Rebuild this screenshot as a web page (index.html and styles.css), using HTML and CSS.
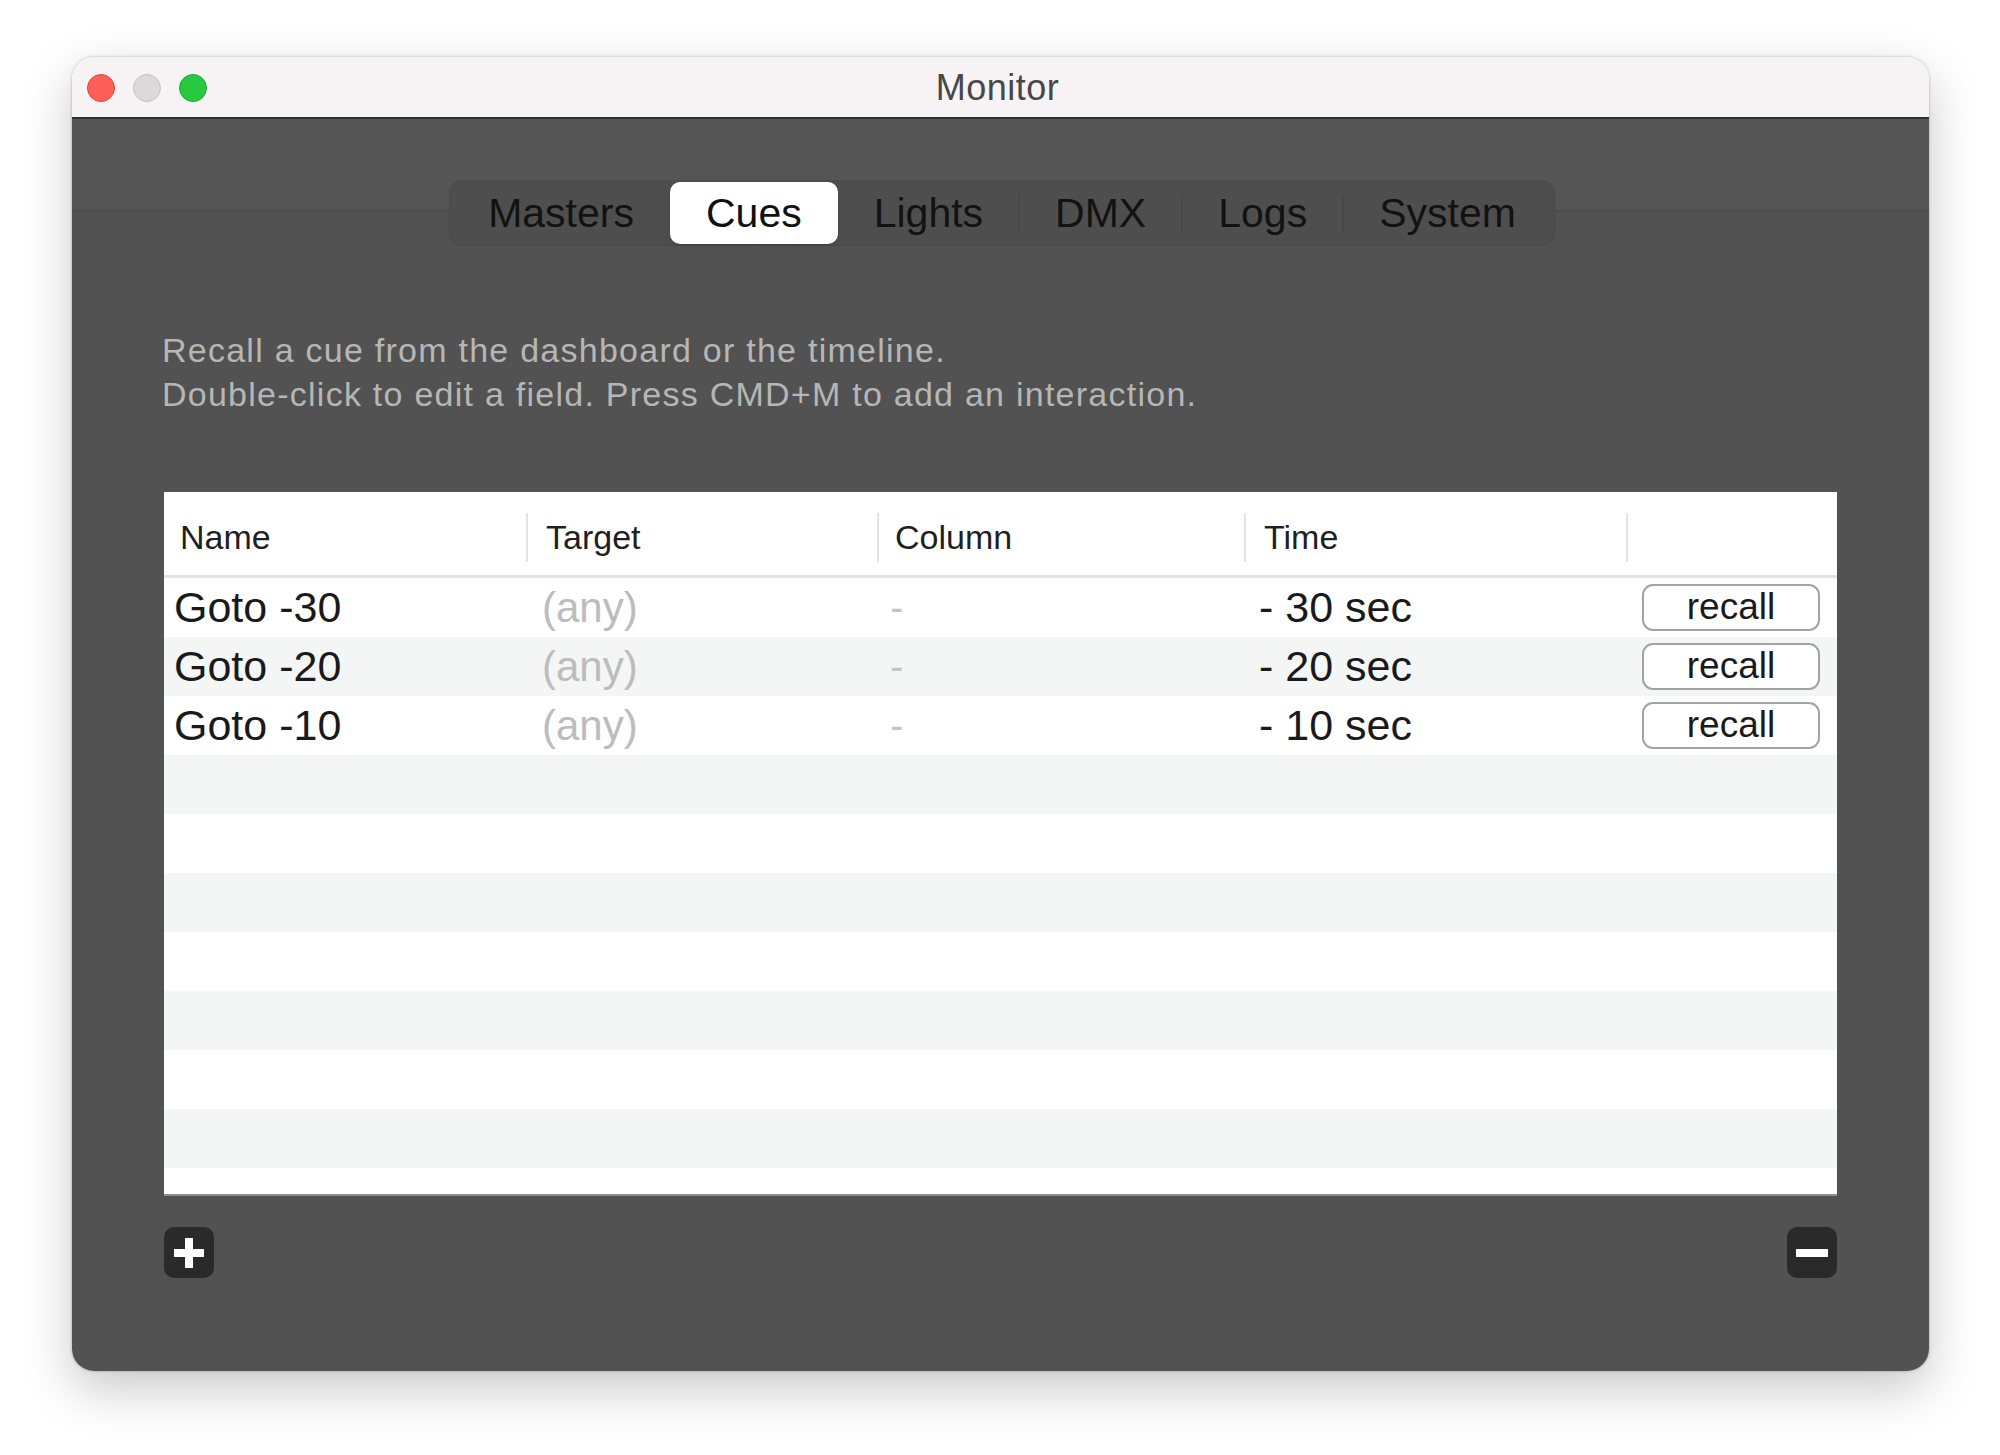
FILE: index.html
```html
<!DOCTYPE html>
<html lang="en">
<head>
<meta charset="utf-8">
<title>Monitor</title>
<link rel="stylesheet" href="styles.css">
</head>
<body>
<div class="window">
  <div class="titlebar">
    <div class="lights">
      <span class="light red"></span>
      <span class="light gray"></span>
      <span class="light green"></span>
    </div>
    <div class="title">Monitor</div>
    <div class="spacer"></div>
  </div>
  <div class="content">
    <div class="tabs-row">
      <div class="segmented">
        <span class="seg">Masters</span>
        <span class="seg active">Cues</span>
        <span class="seg">Lights</span>
        <span class="sep"></span>
        <span class="seg">DMX</span>
        <span class="sep"></span>
        <span class="seg">Logs</span>
        <span class="sep"></span>
        <span class="seg">System</span>
      </div>
    </div>
    <p class="desc">Recall a cue from the dashboard or the timeline.<br>Double-click to edit a field. Press CMD+M to add an interaction.</p>
    <div class="table">
      <div class="thead">
        <div class="th">Name</div>
        <div class="th">Target</div>
        <div class="th">Column</div>
        <div class="th">Time</div>
        <div class="th last"></div>
      </div>
      <div class="tr">
        <div class="td name">Goto -30</div>
        <div class="td muted">(any)</div>
        <div class="td dash">-</div>
        <div class="td time">- 30 sec</div>
        <div class="td act"><button class="recall">recall</button></div>
      </div>
      <div class="tr">
        <div class="td name">Goto -20</div>
        <div class="td muted">(any)</div>
        <div class="td dash">-</div>
        <div class="td time">- 20 sec</div>
        <div class="td act"><button class="recall">recall</button></div>
      </div>
      <div class="tr">
        <div class="td name">Goto -10</div>
        <div class="td muted">(any)</div>
        <div class="td dash">-</div>
        <div class="td time">- 10 sec</div>
        <div class="td act"><button class="recall">recall</button></div>
      </div>
      <div class="tr empty"></div>
      <div class="tr empty"></div>
      <div class="tr empty"></div>
      <div class="tr empty"></div>
      <div class="tr empty"></div>
      <div class="tr empty"></div>
      <div class="tr empty"></div>
    </div>
    <div class="footer">
      <button class="sq" aria-label="Add">
        <svg width="30" height="30" viewBox="0 0 30 30"><rect x="11" y="0" width="8" height="30" fill="#fff"/><rect x="0" y="11" width="30" height="8" fill="#fff"/></svg>
      </button>
      <button class="sq" aria-label="Remove">
        <svg width="32" height="8" viewBox="0 0 32 8"><rect x="0" y="0" width="32" height="8" fill="#fff"/></svg>
      </button>
    </div>
  </div>
</div>
</body>
</html>
```
FILE: styles.css
```css
html, body {
  margin: 0;
  padding: 0;
  background: #ffffff;
}

body {
  font-family: "Liberation Sans", Arial, sans-serif;
  width: 2000px;
  height: 1455px;
  overflow: hidden;
}

.window {
  margin: 57px 0 0 72px;
  width: 1857px;
  height: 1314px;
  border-radius: 22px;
  overflow: hidden;
  display: flex;
  flex-direction: column;
  box-shadow: 0 18px 50px rgba(0, 0, 0, 0.22), 0 0 3px rgba(0, 0, 0, 0.28);
}

.titlebar {
  height: 60px;
  flex: none;
  background: #f7f3f4;
  border-bottom: 2px solid #2e2e2e;
  display: grid;
  grid-template-columns: 1fr auto 1fr;
  align-items: center;
}

.lights {
  display: flex;
  gap: 18px;
  padding-left: 15px;
  padding-top: 2px;
}

.light {
  width: 28px;
  height: 28px;
  border-radius: 50%;
  box-sizing: border-box;
}

.light.red { background: #fe5f57; border: 1px solid #e0443e; }
.light.gray { background: #dcd9da; border: 1px solid #c4c1c2; }
.light.green { background: #28c840; border: 1px solid #1aab29; }

.title {
  font-size: 36px;
  color: #474747;
  letter-spacing: 0.5px;
  padding-top: 2px;
  margin-left: -6px;
}

.content {
  flex: 1;
  background: linear-gradient(#555555 0, #555555 91px, #4c4c4c 91px, #4c4c4c 93px, #525252 93px);
  padding: 61px 92px 0 92px;
  display: flex;
  flex-direction: column;
}

.tabs-row {
  display: flex;
  justify-content: center;
  padding-left: 3px;
}

.segmented {
  display: flex;
  align-items: center;
  height: 66px;
  box-sizing: border-box;
  padding: 2px;
  background: #4e4e4e;
  border: 1px solid #4a4a4a;
  border-radius: 13px;
}

.seg {
  height: 62px;
  display: flex;
  align-items: center;
  padding: 0 36px;
  font-size: 41px;
  color: #121212;
  border-radius: 10px;
}

.seg.active {
  background: #ffffff;
  color: #111111;
  box-shadow: 0 1px 2px rgba(0, 0, 0, 0.25);
}

.sep {
  width: 2px;
  height: 37px;
  margin: 0 -1px;
  background: #484848;
}

.desc {
  margin: 83px 0 0 -2px;
  font-size: 34px;
  letter-spacing: 1.25px;
  line-height: 43.5px;
  color: #b6b6b6;
}

.table {
  margin-top: 76px;
  height: 704px;
  box-sizing: border-box;
  background: #ffffff;
  border-bottom: 2px solid #8d8d8d;
  overflow: hidden;
}

.thead, .tr {
  display: grid;
  grid-template-columns: 364px 351px 367px 382px 1fr;
}

.thead {
  height: 86px;
  border-bottom: 3px solid #e3e3e3;
  align-items: center;
  padding-top: 8px;
  box-sizing: border-box;
}

.th {
  font-size: 34px;
  color: #1f1f1f;
  padding-left: 16px;
  height: 49px;
  display: flex;
  align-items: center;
  box-sizing: border-box;
  border-right: 2px solid #e4e4e4;
}

.th:nth-child(2), .th:nth-child(4) {
  padding-left: 18px;
}

.th.last {
  border-right: none;
}

.tr {
  height: 59px;
  align-items: center;
}

.tr:nth-of-type(odd) {
  background: #f4f5f5;
}

.td {
  font-size: 43px;
  color: #1a1a1a;
  padding-left: 13px;
  white-space: nowrap;
}

.td.name {
  padding-left: 10px;
}

.td.muted {
  color: #bcbcbc;
  padding-left: 14px;
  font-size: 42px;
}

.td.dash {
  color: #c4c4c4;
  padding-left: 11px;
  font-size: 40px;
}

.td.act {
  padding-left: 14px;
  display: flex;
}

.recall {
  width: 178px;
  height: 47px;
  box-sizing: border-box;
  background: #ffffff;
  border: 2px solid #a3a3a3;
  border-radius: 11px;
  font-family: "Liberation Sans", Arial, sans-serif;
  font-size: 37px;
  color: #1a1a1a;
  padding: 0 0 2px 0;
  line-height: 1;
}

.footer {
  margin-top: 31px;
  display: flex;
  justify-content: space-between;
}

.sq {
  width: 50px;
  height: 51px;
  border: none;
  border-radius: 10px;
  background: #2a2a2a;
  padding: 0;
  display: flex;
  align-items: center;
  justify-content: center;
}
```
